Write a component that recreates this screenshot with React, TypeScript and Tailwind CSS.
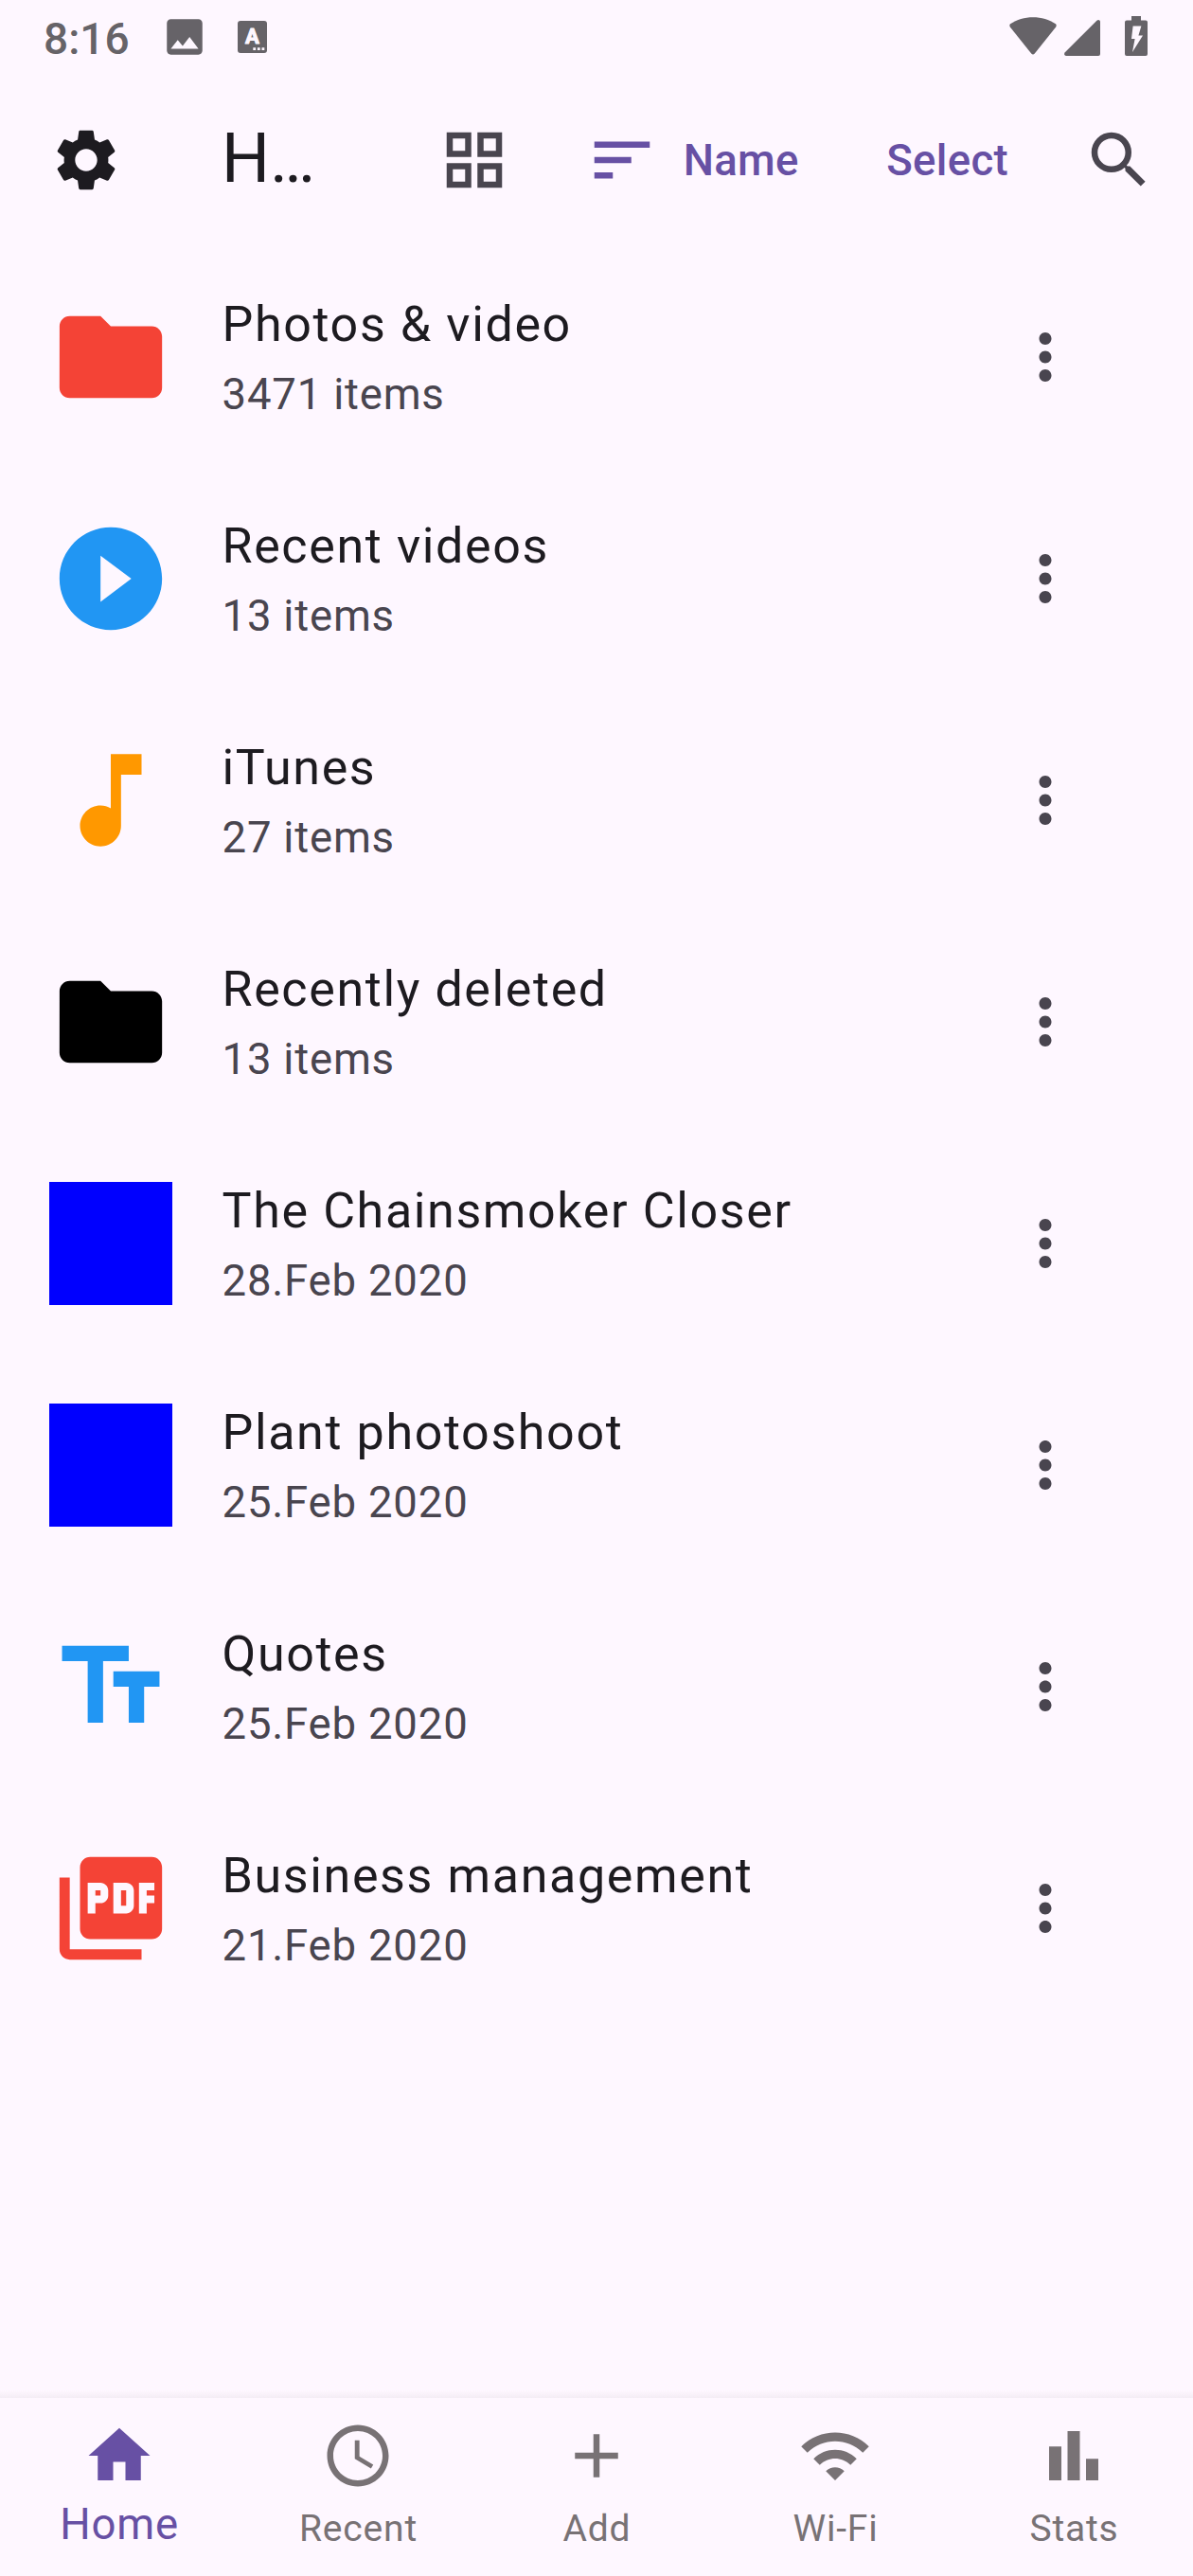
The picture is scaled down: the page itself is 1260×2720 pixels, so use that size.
import type { ReactNode } from "react";
import {
  MdSettings,
  MdSearch,
  MdMoreVert,
  MdFolder,
  MdPlayCircleFilled,
  MdMusicNote,
  MdTextFields,
  MdPictureAsPdf,
  MdImage,
  MdAccessTime,
  MdAdd,
} from "react-icons/md";

type Entry = { title: string; subtitle: string; icon: ReactNode };

const thumbnail = <div className="size-[130px] bg-[#0000ff]" />;

const entries: Entry[] = [
  { title: "Photos & video", subtitle: "3471 items", icon: <MdFolder className="size-[130px] text-[#f44336]" /> },
  { title: "Recent videos", subtitle: "13 items", icon: <MdPlayCircleFilled className="size-[130px] text-[#2196f3]" /> },
  { title: "iTunes", subtitle: "27 items", icon: <MdMusicNote className="size-[130px] text-[#ff9800]" /> },
  { title: "Recently deleted", subtitle: "13 items", icon: <MdFolder className="size-[130px] text-black" /> },
  { title: "The Chainsmoker Closer", subtitle: "28.Feb 2020", icon: thumbnail },
  { title: "Plant photoshoot", subtitle: "25.Feb 2020", icon: thumbnail },
  { title: "Quotes", subtitle: "25.Feb 2020", icon: <MdTextFields className="size-[130px] text-[#2196f3]" /> },
  { title: "Business management", subtitle: "21.Feb 2020", icon: <MdPictureAsPdf className="size-[130px] text-[#f44336]" /> },
];

function Glyph({ d }: { d: string }) {
  return (
    <svg viewBox="0 0 24 24" className="size-[78px] shrink-0" fill="currentColor">
      <path d={d} />
    </svg>
  );
}

function StatusBar() {
  return (
    <div className="flex h-[78px] items-start text-[#666368]">
      <div className="ml-[46px] mt-[14px] text-[46px] leading-[54px] font-medium">8:16</div>
      <MdImage className="ml-[33px] mt-[14px] size-[50px]" />
      <svg viewBox="0 0 31 34" className="ml-[31px] mt-[22px] h-[34px] w-[31px]">
        <rect width="31" height="34" rx="3" fill="currentColor" />
        <text
          x="15.5"
          y="24.3"
          textAnchor="middle"
          fontSize="22"
          fontWeight="700"
          fill="#fef7ff"
          stroke="#fef7ff"
          strokeWidth="1"
          strokeLinejoin="round"
        >
          A
        </text>
        <path d="M16.3 28.3h2.8v2.8h-2.8zM20.9 28.3h2.8v2.8h-2.8zM25.5 28.3h2.8v2.8h-2.8z" fill="#fef7ff" />
      </svg>
      <div className="ml-auto mr-[48px] mt-[17px] flex items-start">
        <svg viewBox="0 0 50 42" className="h-[42px] w-[50px]" fill="currentColor">
          <path d="M1 8.2C8 3.6 16 1.2 25 1.2S42 3.6 49 8.2Q50.3 9.6 49.2 11.4L26.8 39.4Q25 41.6 23.2 39.4L.8 11.4Q-.3 9.6 1 8.2Z" />
        </svg>
        <svg viewBox="0 0 38 42" className="ml-[8px] h-[42px] w-[38px]" fill="currentColor">
          <path d="M.8 38.2 34.4 4.7Q36 3.4 37.4 4.4Q38 4.9 38 6V40Q38 42 36 42H2Q.4 42 .1 40.6 0 39.2 .8 38.2Z" />
        </svg>
        <svg viewBox="0 0 24 42" className="ml-[26px] h-[42px] w-[24px]">
          <path d="M7 0H17V4.5H22Q24 4.5 24 6.5V40Q24 42 22 42H2Q0 42 0 40V6.5Q0 4.5 2 4.5H7Z" fill="currentColor" />
          <path d="M8.6 10.6H17.4L14.4 20.6H19L8 38 10.6 24H7Z" fill="#fef7ff" />
        </svg>
      </div>
    </div>
  );
}

function AppBar() {
  return (
    <header className="flex h-[182px] items-center">
      <div className="flex w-[182px] justify-center">
        <MdSettings className="size-[78px] text-[#1d1b20]" />
      </div>
      <h1 className="mb-[4px] ml-[52px] flex-1 text-[71.5px] leading-[91px] text-[#1d1b20]">H…</h1>
      <div className="flex w-[156px] justify-center text-[#49454f]">
        <Glyph d="M3 3v8h8V3H3zm6 6H5V5h4v4zm-6 4v8h8v-8H3zm6 6H5v-4h4v4zm4-16v8h8V3h-8zm6 6h-4V5h4v4zm-6 4v8h8v-8h-8zm6 6h-4v-4h4v4z" />
      </div>
      <button className="flex items-center gap-[26px] pr-[53.5px] pl-[39px] text-[45.5px] leading-[65px] font-medium tracking-[0.325px] text-[#6750a4]">
        <Glyph d="M3 18h6v-2H3v2zM3 6v2h18V6H3zm0 7h12v-2H3v2z" />
        Name
      </button>
      <button className="px-[39px] text-[45.5px] leading-[65px] font-medium tracking-[0.325px] text-[#6750a4]">
        Select
      </button>
      <div className="flex w-[156px] justify-center">
        <MdSearch className="size-[78px] text-[#49454f]" />
      </div>
    </header>
  );
}

function Row({ title, subtitle, icon }: Entry) {
  return (
    <li className="flex h-[234px] items-center pl-[52px]">
      {icon}
      <div className="ml-[52.5px] flex flex-1 flex-col gap-[3px] pt-[2px]">
        <div className="text-[52px] leading-[75px] tracking-[1.625px] text-[#1d1b20]">{title}</div>
        <div className="text-[45.5px] leading-[68px] tracking-[0.8125px] text-[#49454f]">{subtitle}</div>
      </div>
      <MdMoreVert className="mr-[117px] size-[78px] text-[#49454f]" />
    </li>
  );
}

const tabs: { label: string; icon: ReactNode; active?: boolean }[] = [
  { label: "Home", icon: <Glyph d="M10 20v-6h4v6h5v-8h3L12 3 2 12h3v8z" />, active: true },
  { label: "Recent", icon: <MdAccessTime className="size-[78px]" /> },
  { label: "Add", icon: <MdAdd className="size-[78px]" /> },
  {
    label: "Wi-Fi",
    icon: <Glyph d="M1 9l2 2c4.97-4.97 13.03-4.97 18 0l2-2C16.93 2.93 7.08 2.93 1 9zm8 8l3 3 3-3c-1.65-1.66-4.34-1.66-6 0zm-4-4l2 2c2.76-2.76 7.24-2.76 10 0l2-2C15.14 9.14 8.87 9.14 5 13z" />,
  },
  { label: "Stats", icon: <Glyph d="M4 9h4v11H4zm12 4h4v7h-4zm-6-9h4v16h-4z" /> },
];

function BottomBar() {
  return (
    <nav>
      <div className="h-[8px] bg-linear-to-b from-[#fef7ff] to-[#f4edf5]" />
      <div className="grid h-[188px] grid-cols-5 pt-[22px]">
        {tabs.map((tab) => (
          <div
            key={tab.label}
            className={
              tab.active ? "flex flex-col items-center text-[#6750a4]" : "flex flex-col items-center text-[#787275]"
            }
          >
            {tab.icon}
            <div
              className={
                tab.active
                  ? "mt-[1px] text-[45.5px] leading-[65px] tracking-[0.8125px]"
                  : "mt-[6px] pl-px text-[39px] leading-[65px] tracking-[0.8125px]"
              }
            >
              {tab.label}
            </div>
          </div>
        ))}
      </div>
    </nav>
  );
}

export default function App() {
  return (
    <div className="flex h-[2720px] w-[1260px] flex-col overflow-hidden bg-[#fef7ff] font-['Roboto',sans-serif]">
      <StatusBar />
      <AppBar />
      <ul className="flex-1">
        {entries.map((entry) => (
          <Row key={entry.title} {...entry} />
        ))}
      </ul>
      <BottomBar />
    </div>
  );
}
